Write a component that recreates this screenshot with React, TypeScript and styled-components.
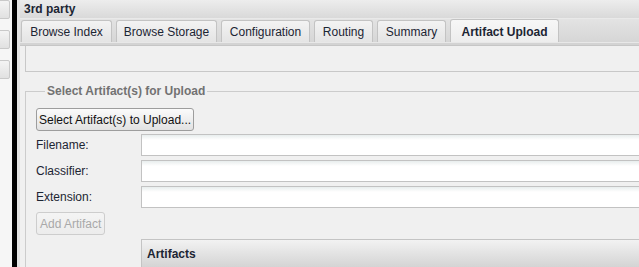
import React from 'react';
import styled, { createGlobalStyle, css } from 'styled-components';

const GlobalStyle = createGlobalStyle`
  html, body {
    margin: 0;
    padding: 0;
    overflow: hidden;
    background: #f0f0f0;
  }
  body {
    font-family: 'Liberation Sans', Arial, sans-serif;
    font-size: 12px;
    color: #1c2533;
  }
`;

const tabs = [
  { label: 'Browse Index', width: 91 },
  { label: 'Browse Storage', width: 101 },
  { label: 'Configuration', width: 89 },
  { label: 'Routing', width: 59 },
  { label: 'Summary', width: 69 },
  { label: 'Artifact Upload', width: 109, active: true },
];

const fields = ['Filename:', 'Classifier:', 'Extension:'];

const App: React.FC = () => {
  return (
    <>
      <GlobalStyle />
      <Shell>
        <SideRail>
          <RailButton />
          <RailButton />
          <RailButton />
        </SideRail>
        <Divider />
        <Gutter />
        <Panel>
          <PanelHeader>3rd party</PanelHeader>
          <TabBar>
            {tabs.map((t) => (
              <Tab key={t.label} width={t.width} active={t.active}>
                {t.label}
              </Tab>
            ))}
          </TabBar>
          <TabBarBase />
          <Content>
            <Toolbar />
            <Fieldset>
              <Legend>Select Artifact(s) for Upload</Legend>
              <Button>Select Artifact(s) to Upload...</Button>
              <Form>
                {fields.map((f) => (
                  <FieldRow key={f}>
                    <Label>{f}</Label>
                    <Input />
                  </FieldRow>
                ))}
              </Form>
              <Button disabled>Add Artifact</Button>
              <Grid>
                <GridHeader>Artifacts</GridHeader>
              </Grid>
            </Fieldset>
          </Content>
        </Panel>
      </Shell>
    </>
  );
};

export default App;

const Shell = styled.div`
  display: flex;
  width: 690px;
  height: 267px;
  overflow: hidden;
`;

const SideRail = styled.div`
  width: 12px;
  flex: none;
  background: #f6f6f6;
  overflow: hidden;
  display: flex;
  flex-direction: column;
  gap: 11px;
`;

const RailButton = styled.div`
  width: 20px;
  height: 17px;
  margin-left: -12px;
  border: 1px solid #c9c9c9;
  border-radius: 2px;
  background: linear-gradient(#f4f4f4, #e1e1e1);
`;

const Divider = styled.div`
  width: 5px;
  flex: none;
  background: #000;
`;

const Gutter = styled.div`
  width: 3px;
  flex: none;
  background: #e3e3e3;
`;

const Panel = styled.div`
  flex: 1;
  display: flex;
  flex-direction: column;
  background: #f0f0f0;
`;

const PanelHeader = styled.div`
  height: 20px;
  line-height: 18px;
  padding-left: 4px;
  font-weight: bold;
  color: #1c2533;
  background: linear-gradient(#ededed, #d9d9d9);
`;

const TabBar = styled.div`
  height: 23px;
  display: flex;
  align-items: flex-end;
  gap: 4px;
  padding-left: 1px;
  border-top: 1px solid #e9e9e9;
  background: linear-gradient(#e3e3e3, #d6d6d6);
`;

const Tab = styled.div<{ width: number; active?: boolean }>`
  width: ${({ width }) => width}px;
  height: 22px;
  line-height: 23px;
  box-sizing: border-box;
  text-align: center;
  border: 1px solid #c3c3c3;
  border-bottom: none;
  border-radius: 3px 3px 0 0;
  background: linear-gradient(#f3f3f3, #e4e4e4);
  color: #1c2533;
  white-space: nowrap;
  ${({ active }) =>
    active &&
    css`
      height: 23px;
      line-height: 24px;
      font-weight: bold;
      background: linear-gradient(#f7f7f7, #ededed);
    `}
`;

const TabBarBase = styled.div`
  height: 3px;
  border-top: 1px solid #e8e8e8;
  border-bottom: 1px solid #c6c6c6;
  background: #d3d3d3;
`;

const Content = styled.div`
  flex: 1;
  padding-left: 5px;
  display: flex;
  flex-direction: column;
`;

const Toolbar = styled.div`
  height: 25px;
  border-left: 1px solid #c8c8c8;
  border-bottom: 1px solid #c8c8c8;
  background: #f0f0f0;
`;

const Fieldset = styled.fieldset`
  margin: 12px 0 0;
  padding: 4px 0 0 10px;
  border: 1px solid #cccccc;
  border-bottom: none;
  display: flex;
  flex-direction: column;
  align-items: flex-start;
`;

const Legend = styled.legend`
  margin-left: 9px;
  padding: 0 2px;
  line-height: 14px;
  font-weight: bold;
  color: #727272;
`;

const Button = styled.button`
  height: 23px;
  margin: 6px 0 0;
  padding: 0 2px;
  font-family: 'Liberation Sans', Arial, sans-serif;
  font-size: 12px;
  color: #111;
  border: 1px solid #9d9d9d;
  border-radius: 3px;
  background: linear-gradient(#fbfbfb, #e2e2e2);
  &:disabled {
    margin-top: 4px;
    padding: 0 3px;
    color: #a9a9a9;
    border-color: #cdcdcd;
    background: linear-gradient(#f4f4f4, #ececec);
  }
`;

const Form = styled.div`
  display: flex;
  flex-direction: column;
  gap: 4px;
  margin-top: 3px;
  align-self: stretch;
`;

const FieldRow = styled.div`
  display: flex;
  align-items: center;
`;

const Label = styled.label`
  width: 105px;
  flex: none;
  color: #1c2533;
`;

const Input = styled.input`
  flex: 1;
  height: 22px;
  box-sizing: border-box;
  border: 1px solid #c2c2c2;
  background: linear-gradient(#e8eded, #ffffff 5px);
  outline: none;
`;

const Grid = styled.div`
  align-self: stretch;
  margin: 4px 0 0 105px;
  border-left: 1px solid #c4c4c4;
  border-top: 1px solid #c4c4c4;
`;

const GridHeader = styled.div`
  height: 27px;
  line-height: 28px;
  padding-left: 5px;
  font-weight: bold;
  color: #1c2533;
  background: linear-gradient(#f2f2f2, #d4d4d4);
`;
